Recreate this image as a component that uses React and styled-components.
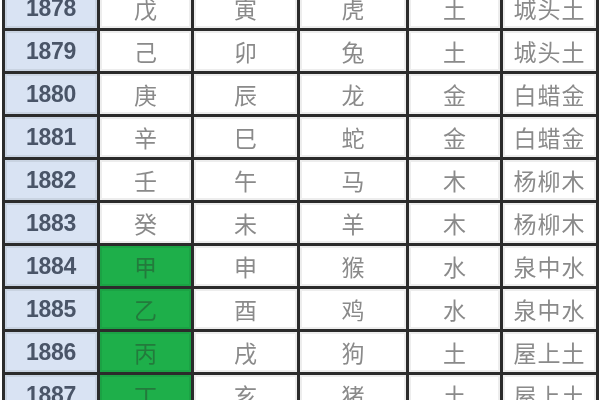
import React from 'react';
import styled, { createGlobalStyle } from 'styled-components';

const GlobalStyle = createGlobalStyle`
  html, body {
    margin: 0;
    padding: 0;
    background: #ffffff;
    overflow: hidden;
  }
`;

const Page = styled.div`
  width: 600px;
  height: 400px;
  overflow: hidden;
  padding-left: 2px;
  box-sizing: border-box;
`;

const Table = styled.table`
  border-collapse: collapse;
  table-layout: fixed;
  width: 596px;
  margin-top: -15px;
  filter: blur(0.45px);
`;

const Cell = styled.td`
  height: 40px;
  padding: 0;
  border: 3px solid #2b2b2b;
  text-align: center;
  vertical-align: middle;
  box-shadow: inset 0 0 0 2px rgba(0, 0, 0, 0.07);
  background: ${(p) => (p.$green ? '#1eaf4a' : '#ffffff')};
  color: ${(p) => (p.$green ? '#237a3c' : '#8a8a8a')};
  font-family: "Noto Sans CJK SC", "Noto Sans", sans-serif;
  font-size: 23px;
  line-height: 1;
  letter-spacing: ${(p) => (p.$wide ? '1px' : '0')};
`;

const YearCell = styled(Cell)`
  background: #d9e3f3;
  color: #4a5568;
  font-family: "Liberation Sans", Arial, sans-serif;
  font-weight: bold;
  font-size: 23px;
  letter-spacing: -0.3px;
`;

const rows = [
  ['1878', '戊', '寅', '虎', '土', '城头土'],
  ['1879', '己', '卯', '兔', '土', '城头土'],
  ['1880', '庚', '辰', '龙', '金', '白蜡金'],
  ['1881', '辛', '巳', '蛇', '金', '白蜡金'],
  ['1882', '壬', '午', '马', '木', '杨柳木'],
  ['1883', '癸', '未', '羊', '木', '杨柳木'],
  ['1884', '甲', '申', '猴', '水', '泉中水'],
  ['1885', '乙', '酉', '鸡', '水', '泉中水'],
  ['1886', '丙', '戌', '狗', '土', '屋上土'],
  ['1887', '丁', '亥', '猪', '土', '屋上土'],
];

const widths = [95, 94, 106, 109, 94, 96];

export default function App() {
  return (
    <Page>
      <GlobalStyle />
      <Table>
        <colgroup>
          {widths.map((w, i) => (
            <col key={i} style={{ width: w }} />
          ))}
        </colgroup>
        <tbody>
          {rows.map((r) => {
            const green = Number(r[0]) >= 1884;
            return (
              <tr key={r[0]}>
                <YearCell>{r[0]}</YearCell>
                <Cell $green={green}>{r[1]}</Cell>
                <Cell>{r[2]}</Cell>
                <Cell>{r[3]}</Cell>
                <Cell>{r[4]}</Cell>
                <Cell $wide>{r[5]}</Cell>
              </tr>
            );
          })}
        </tbody>
      </Table>
    </Page>
  );
}
